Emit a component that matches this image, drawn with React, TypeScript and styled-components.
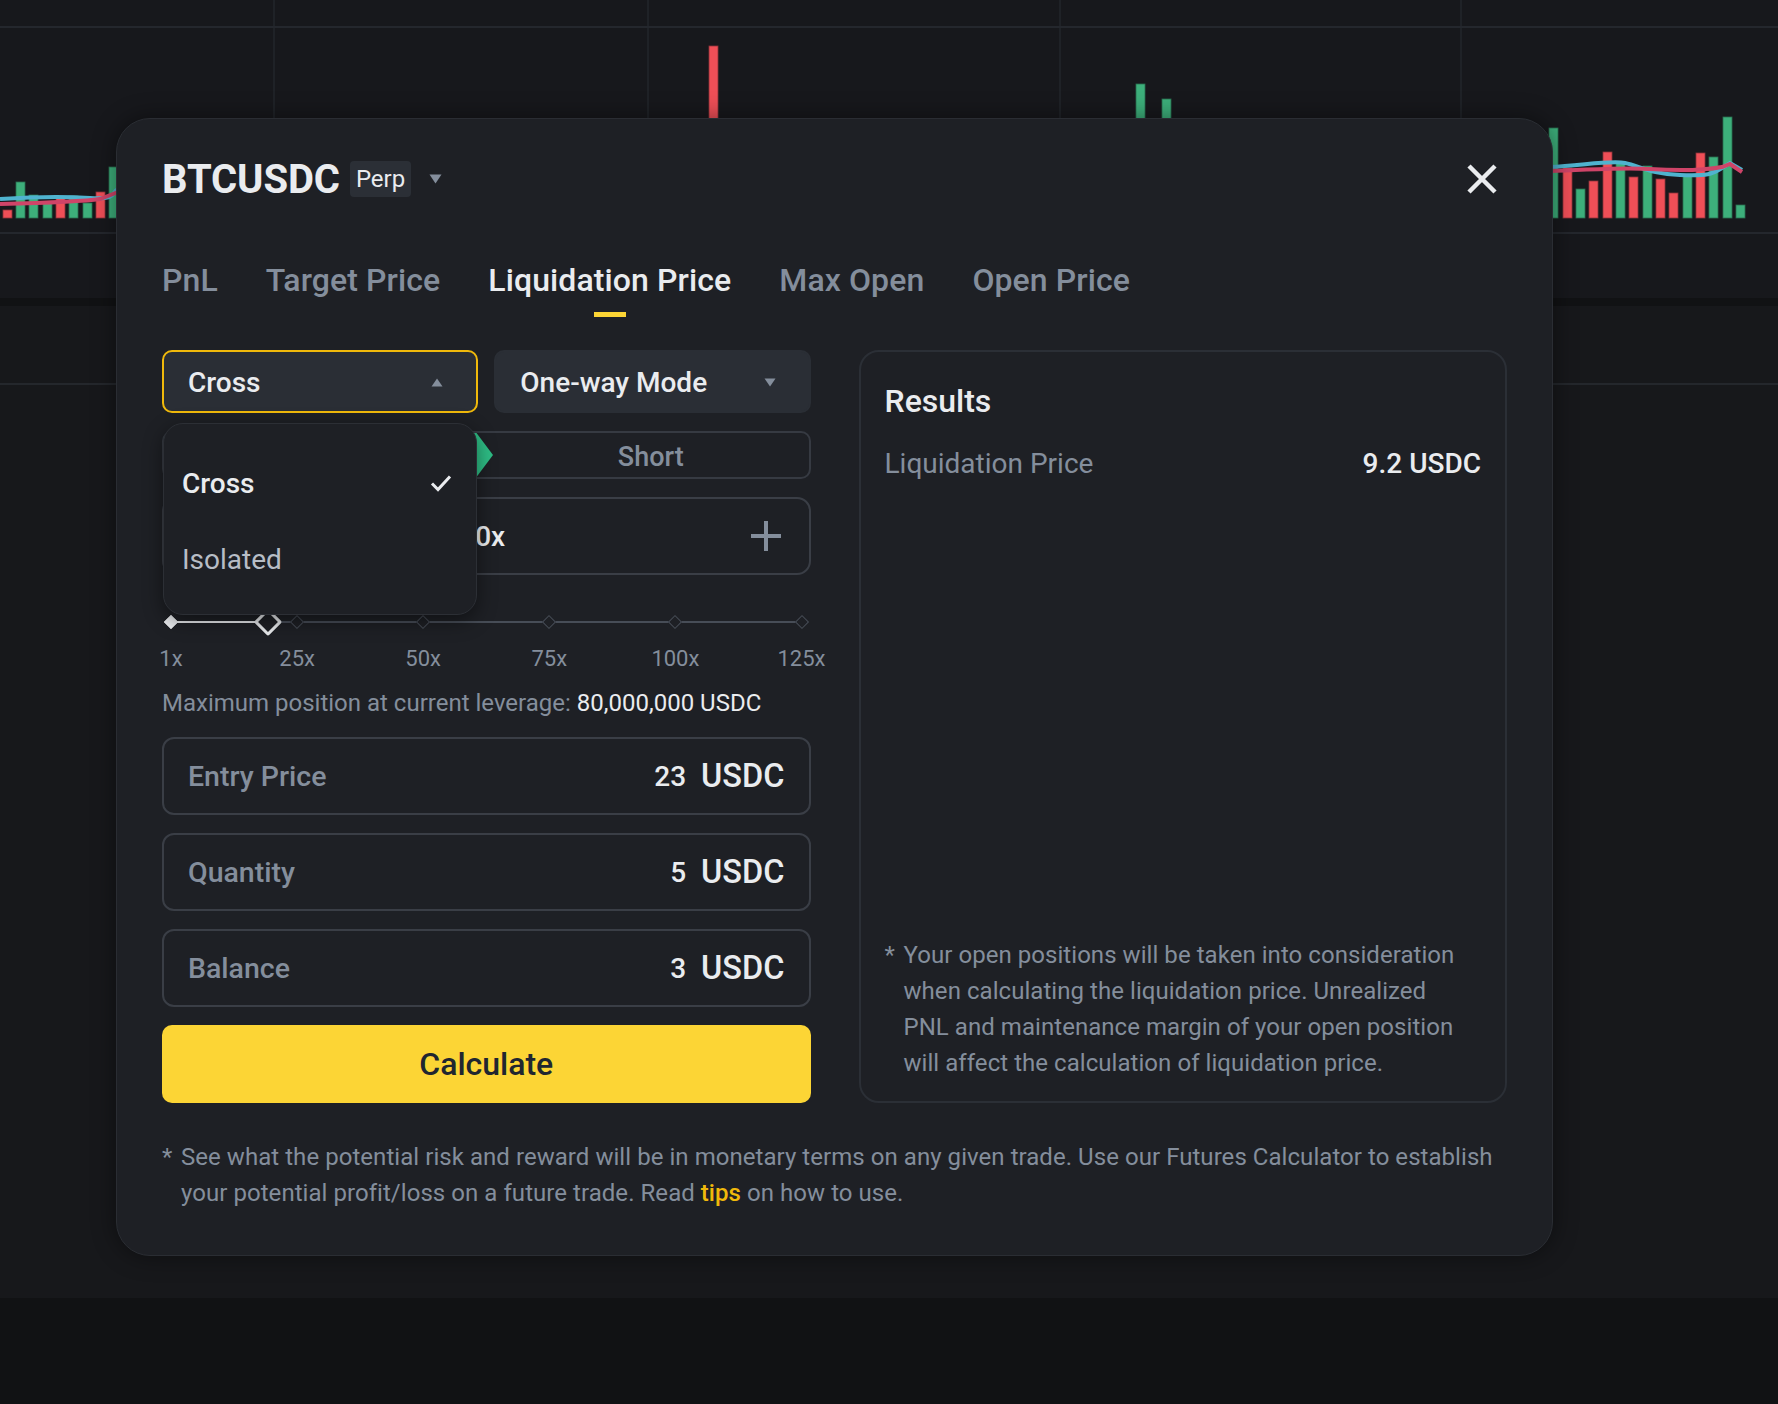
import styled, { createGlobalStyle } from 'styled-components';

const GlobalStyle = createGlobalStyle`
  html, body {
    margin: 0;
    padding: 0;
    background: #111214;
  }
  body {
    font-family: Roboto, "Liberation Sans", Arial, sans-serif;
    -webkit-font-smoothing: antialiased;
  }
  * {
    box-sizing: border-box;
  }
`;

const Page = styled.div`
  position: relative;
  width: 1778px;
  height: 1404px;
  overflow: hidden;
  display: flex;
  flex-direction: column;
  background: #111214;
`;

const ChartPane = styled.div`
  height: 298px;
  background: #17181c;

  svg {
    display: block;
  }
`;

const Splitter = styled.div`
  height: 8px;
  background: #111214;
`;

const LowerPane = styled.div`
  height: 992px;
  background: #17181b;
`;

const LowerHeader = styled.div`
  height: 79px;
  border-bottom: 2px solid #24272c;
`;

const Modal = styled.div`
  position: absolute;
  left: 116px;
  top: 118px;
  width: 1437px;
  padding: 36px 45px 44px;
  background: #1e2025;
  border: 1px solid #2a2d33;
  border-radius: 34px;
  box-shadow: 0 0 24px rgba(0, 0, 0, 0.45);
  color: #eaecef;
`;

const Header = styled.div`
  display: flex;
  align-items: center;
  height: 48px;
`;

const Symbol = styled.div`
  font-size: 40px;
  font-weight: 700;
  letter-spacing: -0.1px;
`;

const Badge = styled.span`
  margin-left: 10px;
  height: 36px;
  padding: 0 6px;
  display: inline-flex;
  align-items: center;
  background: #2b2f36;
  border-radius: 4px;
  font-size: 24px;
  color: #eaecef;
`;

const SymbolCaret = styled.svg`
  margin-left: 18px;
`;

const CloseButton = styled.div`
  margin-left: auto;
  width: 50px;
  height: 44px;
  display: flex;
  align-items: center;
  justify-content: center;
`;

const Tabs = styled.div`
  margin-top: 57px;
  display: flex;
  gap: 48px;
`;

const Tab = styled.div<{ $active?: boolean }>`
  position: relative;
  padding-bottom: 17px;
  font-size: 32px;
  line-height: 40px;
  font-weight: 500;
  letter-spacing: 0.1px;
  color: ${(p) => (p.$active ? '#eaecef' : '#848e9c')};

  &::after {
    content: '';
    display: ${(p) => (p.$active ? 'block' : 'none')};
    position: absolute;
    left: 50%;
    bottom: 0;
    width: 32px;
    height: 5px;
    margin-left: -16px;
    background: #fcd535;
  }
`;

const Body = styled.div`
  margin-top: 33px;
  display: grid;
  grid-template-columns: 1fr 1fr;
  gap: 48px;
`;

const Column = styled.div`
  display: flex;
  flex-direction: column;
`;

const SelectRow = styled.div`
  display: flex;
  gap: 16px;
`;

const SelectWrap = styled.div`
  position: relative;
  flex: 1;
`;

const Select = styled.div<{ $open?: boolean }>`
  height: 63px;
  display: flex;
  align-items: center;
  padding: 2px 33px 0 24px;
  background: #2a2e35;
  border: 2px solid ${(p) => (p.$open ? '#f0b90b' : '#2a2e35')};
  border-radius: 10px;
  font-size: 28px;
  font-weight: 500;
  color: #eaecef;

  svg {
    margin-left: auto;
  }
`;

const Menu = styled.div`
  position: absolute;
  z-index: 3;
  top: calc(100% + 10px);
  left: 1px;
  right: 1px;
  padding: 21px 0 17px;
  background: #1e2025;
  border: 1px solid #2c2f35;
  border-radius: 20px;
  box-shadow: 0 6px 20px rgba(0, 0, 0, 0.45);
`;

const MenuItem = styled.div<{ $selected?: boolean }>`
  height: 76px;
  display: flex;
  align-items: center;
  justify-content: space-between;
  padding: 0 24px 0 18px;
  font-size: 28px;
  font-weight: ${(p) => (p.$selected ? 500 : 400)};
  color: ${(p) => (p.$selected ? '#eaecef' : '#b7bdc6')};
`;

const SideToggle = styled.div`
  margin-top: 18px;
  height: 48px;
  display: flex;
  border: 2px solid #363a42;
  border-radius: 10px;
  overflow: hidden;
`;

const LongButton = styled.div`
  width: 331px;
  margin: -2px 0 -2px -2px;
  display: flex;
  align-items: center;
  justify-content: center;
  background: #2ebd85;
  clip-path: polygon(0 0, calc(100% - 18px) 0, 100% 50%, calc(100% - 18px) 100%, 0 100%);
  font-size: 27px;
  font-weight: 500;
  color: #ffffff;
`;

const ShortButton = styled.div`
  flex: 1;
  display: flex;
  align-items: center;
  justify-content: center;
  padding-top: 3px;
  font-size: 27px;
  font-weight: 500;
  color: #848e9c;
`;

const LeverageBox = styled.div`
  margin-top: 18px;
  height: 78px;
  display: flex;
  align-items: center;
  padding: 0 28px;
  border: 2px solid #3a3e46;
  border-radius: 14px;
`;

const LeverageValue = styled.div`
  flex: 1;
  padding-right: 8px;
  text-align: center;
  font-size: 28px;
  font-weight: 500;
  color: #eaecef;
`;

const Slider = styled.div`
  position: relative;
  margin: 35px 9px 0;
  height: 64px;
`;

const Track = styled.div`
  position: absolute;
  left: 0;
  right: 0;
  top: 11px;
  height: 2px;
  background: #474d57;
`;

const TrackFill = styled.div`
  position: absolute;
  left: 0;
  top: 11px;
  height: 2px;
  background: #eaecef;
`;

const Mark = styled.div<{ $filled?: boolean }>`
  position: absolute;
  top: 7px;
  width: 10px;
  height: 10px;
  margin-left: -5px;
  transform: rotate(45deg);
  background: ${(p) => (p.$filled ? '#eaecef' : '#1e2025')};
  border: 1.5px solid ${(p) => (p.$filled ? '#eaecef' : '#474d57')};
`;

const Thumb = styled.div`
  position: absolute;
  top: 2px;
  width: 20px;
  height: 20px;
  margin-left: -10px;
  transform: rotate(45deg);
  background: #1e2025;
  border: 3px solid #eaecef;
  border-radius: 2px;
`;

const MarkLabel = styled.div`
  position: absolute;
  top: 34px;
  transform: translateX(-50%);
  font-size: 22px;
  line-height: 30px;
  color: #848e9c;
`;

const MaxPosition = styled.div`
  margin-top: 14px;
  font-size: 24px;
  line-height: 30px;
  color: #848e9c;

  b {
    font-weight: 400;
    color: #eaecef;
  }
`;

const Field = styled.div`
  margin-top: 18px;
  height: 78px;
  display: flex;
  align-items: center;
  padding: 0 24px 0 24px;
  border: 2px solid #3a3e46;
  border-radius: 12px;
`;

const FieldLabel = styled.div`
  font-size: 28.5px;
  font-weight: 500;
  color: #848e9c;
`;

const FieldValue = styled.div`
  margin-left: auto;
  font-size: 28px;
  font-weight: 500;
  color: #eaecef;
`;

const FieldUnit = styled.div`
  margin-left: 15px;
  font-size: 32.5px;
  font-weight: 500;
  color: #eaecef;
`;

const CalcButton = styled.div`
  margin-top: 18px;
  height: 78px;
  display: flex;
  align-items: center;
  justify-content: center;
  background: #fcd535;
  border-radius: 10px;
  font-size: 32px;
  font-weight: 500;
  color: #202630;
`;

const Results = styled.div`
  display: flex;
  flex-direction: column;
  padding: 29px 24px 20px;
  border: 2px solid #2b2f36;
  border-radius: 20px;
`;

const ResultsTitle = styled.div`
  font-size: 32px;
  line-height: 40px;
  font-weight: 500;
  color: #eaecef;
`;

const ResultRow = styled.div`
  margin-top: 25px;
  display: flex;
  justify-content: space-between;
  font-size: 28px;
  line-height: 36px;
  color: #848e9c;

  span:last-child {
    font-weight: 500;
    color: #eaecef;
  }
`;

const Note = styled.div<{ $inBox?: boolean }>`
  display: flex;
  margin-top: ${(p) => (p.$inBox ? 'auto' : '36px')};
  padding-right: ${(p) => (p.$inBox ? '18px' : '0')};
  font-size: 24px;
  line-height: 36px;
  letter-spacing: 0.05px;
  color: #848e9c;

  & > span:first-child {
    flex: none;
    width: 19px;
  }

  a {
    color: #f0b90b;
    font-weight: 500;
    text-decoration: none;
  }
`;

const bars: [number, number, string][] = [
  [3, 210, 'r'], [16, 182, 'g'], [29, 195, 'g'], [43, 202, 'g'], [56, 198, 'r'],
  [69, 196, 'g'], [83, 203, 'g'], [96, 192, 'r'], [109, 167, 'g'],
  [709, 46, 'r'], [1136, 84, 'g'], [1162, 99, 'g'],
  [1549, 128, 'g'], [1563, 168, 'r'], [1576, 189, 'g'], [1589, 181, 'r'], [1603, 152, 'r'],
  [1616, 162, 'g'], [1629, 177, 'r'], [1643, 166, 'g'], [1656, 179, 'r'], [1669, 193, 'r'],
  [1683, 176, 'g'], [1696, 153, 'r'], [1709, 157, 'g'], [1723, 117, 'g'], [1736, 205, 'g'],
];

const marks = [1, 25, 50, 75, 100, 125];
const leverage = 20;

function BackgroundChart() {
  return (
    <svg width="1778" height="298" viewBox="0 0 1778 298">
      {[274, 648, 1060, 1461].map((x) => (
        <line key={x} x1={x} y1={0} x2={x} y2={298} stroke="#1f2227" strokeWidth="2" />
      ))}
      <line x1={0} y1={27} x2={1778} y2={27} stroke="#24272d" strokeWidth="2" />
      <line x1={0} y1={233} x2={1778} y2={233} stroke="#24272d" strokeWidth="2" />
      {bars.map(([x, top, c]) => (
        <rect
          key={x}
          x={x}
          y={top}
          width={9}
          height={218 - top}
          fill={c === 'g' ? '#3daf7b' : '#ef4f57'}
          stroke={c === 'g' ? '#2a6e51' : '#8e323a'}
          strokeWidth="0.8"
        />
      ))}
      <path d="M0 199 C 30 197, 60 196, 90 198 S 110 192, 118 189" fill="none" stroke="#4fb3cf" strokeWidth="4" />
      <path d="M0 204 C 40 203, 80 202, 100 199 L 118 192" fill="none" stroke="#cf4468" strokeWidth="4" />
      <path
        d="M1550 167 C 1580 166, 1610 160, 1625 163 S 1650 174, 1680 175 S 1712 174, 1722 168 L 1730 163 L 1742 170"
        fill="none"
        stroke="#4fb3cf"
        strokeWidth="4"
      />
      <path
        d="M1550 171 C 1590 170, 1620 167, 1650 169 S 1700 171, 1722 167 L 1730 164 L 1742 172"
        fill="none"
        stroke="#cf4468"
        strokeWidth="4"
      />
    </svg>
  );
}

function Caret({ up }: { up?: boolean }) {
  return (
    <svg width="12" height="9" viewBox="0 0 12 9">
      <path d={up ? 'M6 0.5 L11.5 8.5 L0.5 8.5 Z' : 'M0.5 0.5 L11.5 0.5 L6 8.5 Z'} fill="#848e9c" strokeLinejoin="round" />
    </svg>
  );
}

export default function App() {
  const pct = ((leverage - 1) / 124) * 100;

  return (
    <>
      <GlobalStyle />
      <Page>
        <ChartPane>
          <BackgroundChart />
        </ChartPane>
        <Splitter />
        <LowerPane>
          <LowerHeader />
        </LowerPane>

        <Modal>
          <Header>
            <Symbol>BTCUSDC</Symbol>
            <Badge>Perp</Badge>
            <SymbolCaret width="13" height="10" viewBox="0 0 13 10">
              <path d="M0.5 0.5 L12.5 0.5 L6.5 9.5 Z" fill="#848e9c" />
            </SymbolCaret>
            <CloseButton>
              <svg width="30" height="30" viewBox="0 0 30 30">
                <path d="M2 2 L28 28 M28 2 L2 28" stroke="#eaecef" strokeWidth="4.5" />
              </svg>
            </CloseButton>
          </Header>

          <Tabs>
            <Tab>PnL</Tab>
            <Tab>Target Price</Tab>
            <Tab $active>Liquidation Price</Tab>
            <Tab>Max Open</Tab>
            <Tab>Open Price</Tab>
          </Tabs>

          <Body>
            <Column>
              <SelectRow>
                <SelectWrap>
                  <Select $open>
                    Cross
                    <Caret up />
                  </Select>
                  <Menu>
                    <MenuItem $selected>
                      Cross
                      <svg width="22" height="18" viewBox="0 0 22 18">
                        <path d="M2 9.5 L8 15.5 L20 2.5" fill="none" stroke="#eaecef" strokeWidth="3" />
                      </svg>
                    </MenuItem>
                    <MenuItem>Isolated</MenuItem>
                  </Menu>
                </SelectWrap>
                <SelectWrap>
                  <Select>
                    One-way Mode
                    <Caret />
                  </Select>
                </SelectWrap>
              </SelectRow>

              <SideToggle>
                <LongButton>Long</LongButton>
                <ShortButton>Short</ShortButton>
              </SideToggle>

              <LeverageBox>
                <svg width="30" height="30" viewBox="0 0 30 30">
                  <path d="M0 15 H30" stroke="#848e9c" strokeWidth="4" />
                </svg>
                <LeverageValue>{leverage}x</LeverageValue>
                <svg width="30" height="30" viewBox="0 0 30 30">
                  <path d="M0 15 H30 M15 0 V30" stroke="#848e9c" strokeWidth="4" />
                </svg>
              </LeverageBox>

              <Slider>
                <Track />
                <TrackFill style={{ width: `${pct}%` }} />
                {marks.map((m, i) => (
                  <Mark key={m} $filled={m <= leverage} style={{ left: `${i * 20}%` }} />
                ))}
                <Thumb style={{ left: `${pct}%` }} />
                {marks.map((m, i) => (
                  <MarkLabel key={m} style={{ left: `${i * 20}%` }}>
                    {m}x
                  </MarkLabel>
                ))}
              </Slider>

              <MaxPosition>
                Maximum position at current leverage: <b>80,000,000 USDC</b>
              </MaxPosition>

              <Field style={{ marginTop: 19 }}>
                <FieldLabel>Entry Price</FieldLabel>
                <FieldValue>23</FieldValue>
                <FieldUnit>USDC</FieldUnit>
              </Field>
              <Field>
                <FieldLabel>Quantity</FieldLabel>
                <FieldValue>5</FieldValue>
                <FieldUnit>USDC</FieldUnit>
              </Field>
              <Field>
                <FieldLabel>Balance</FieldLabel>
                <FieldValue>3</FieldValue>
                <FieldUnit>USDC</FieldUnit>
              </Field>

              <CalcButton>Calculate</CalcButton>
            </Column>

            <Results>
              <ResultsTitle>Results</ResultsTitle>
              <ResultRow>
                <span>Liquidation Price</span>
                <span>9.2 USDC</span>
              </ResultRow>
              <Note $inBox>
                <span>*</span>
                <span>
                  Your open positions will be taken into consideration when calculating the liquidation price.
                  Unrealized PNL and maintenance margin of your open position will affect the calculation of
                  liquidation price.
                </span>
              </Note>
            </Results>
          </Body>

          <Note>
            <span>*</span>
            <span>
              See what the potential risk and reward will be in monetary terms on any given trade. Use our Futures
              Calculator to establish your potential profit/loss on a future trade. Read <a href="#">tips</a> on how
              to use.
            </span>
          </Note>
        </Modal>
      </Page>
    </>
  );
}
